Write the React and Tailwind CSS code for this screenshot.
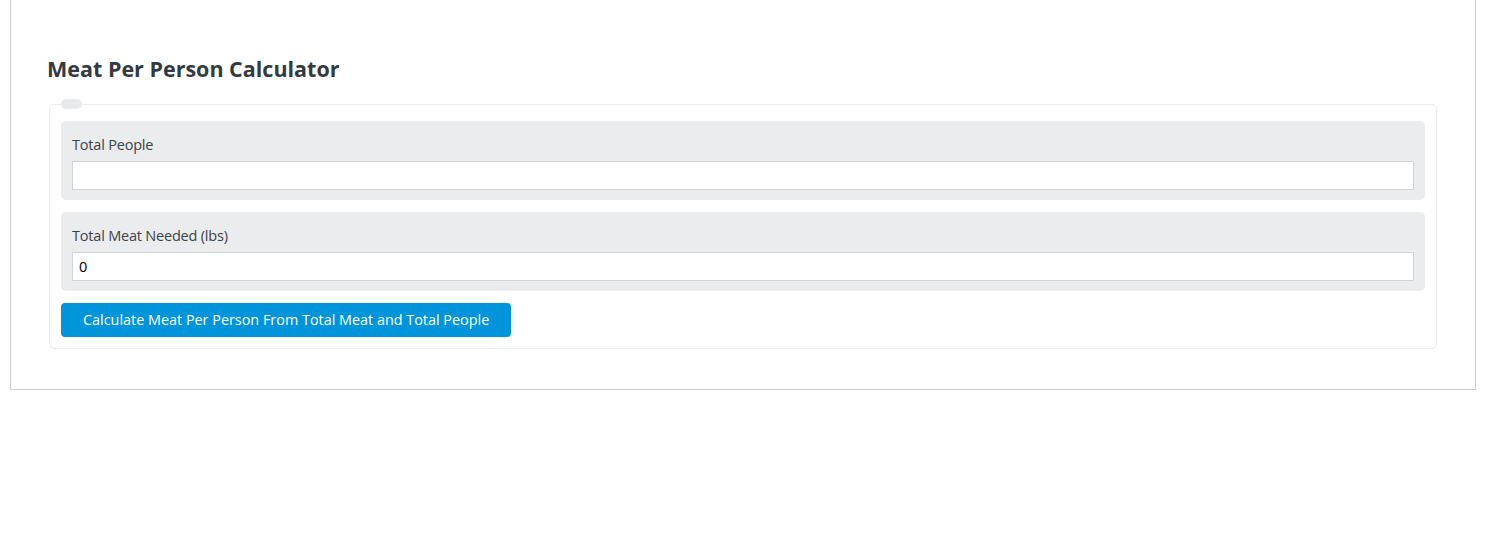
export default function App() {
  return (
    <div className="min-h-[554px] bg-white" style={{ fontFamily: '"Open Sans", "Noto Sans", sans-serif' }}>
      <div className="ml-[10px] mr-[21px] border-x border-b border-[#cfcfcf] px-[38px] pt-[56px] pb-[40px]">
        <h2 className="-ml-[2px] mb-[17px] text-[21.5px] font-bold leading-[26px] text-[#333b40]">
          Meat Per Person Calculator
        </h2>
        <fieldset className="rounded-[5px] border border-[#ececec] px-[11px] pb-[11px] pt-[12px]">
          <legend className="h-[10px] w-[21px] rounded-[5px] bg-[#e8e9ea]"></legend>
          <div className="flex flex-col gap-[12px]">
            <div className="rounded-[5px] bg-[#ebeced] px-[11px] pt-[14px] pb-[10px]">
              <label className="block text-[14.5px] leading-[20px] text-[#3b434a] tracking-[-0.2px]">Total People</label>
              <input
                type="text"
                className="mt-[6px] block h-[29px] w-full border border-[#d3d3d3] bg-white px-[6px] text-[14.5px] text-black outline-none"
              />
            </div>
            <div className="rounded-[5px] bg-[#ebeced] px-[11px] pt-[14px] pb-[10px]">
              <label className="block text-[14.5px] leading-[20px] text-[#3b434a] tracking-[-0.2px]">Total Meat Needed (lbs)</label>
              <input
                type="text"
                defaultValue="0"
                className="mt-[6px] block h-[29px] w-full border border-[#d3d3d3] bg-white px-[6px] text-[14.5px] text-black outline-none"
              />
            </div>
            <div>
              <button className="h-[34px] rounded-[4px] bg-[#0094da] px-[22px] text-[14.4px] text-white">
                Calculate Meat Per Person From Total Meat and Total People
              </button>
            </div>
          </div>
        </fieldset>
      </div>
    </div>
  );
}
